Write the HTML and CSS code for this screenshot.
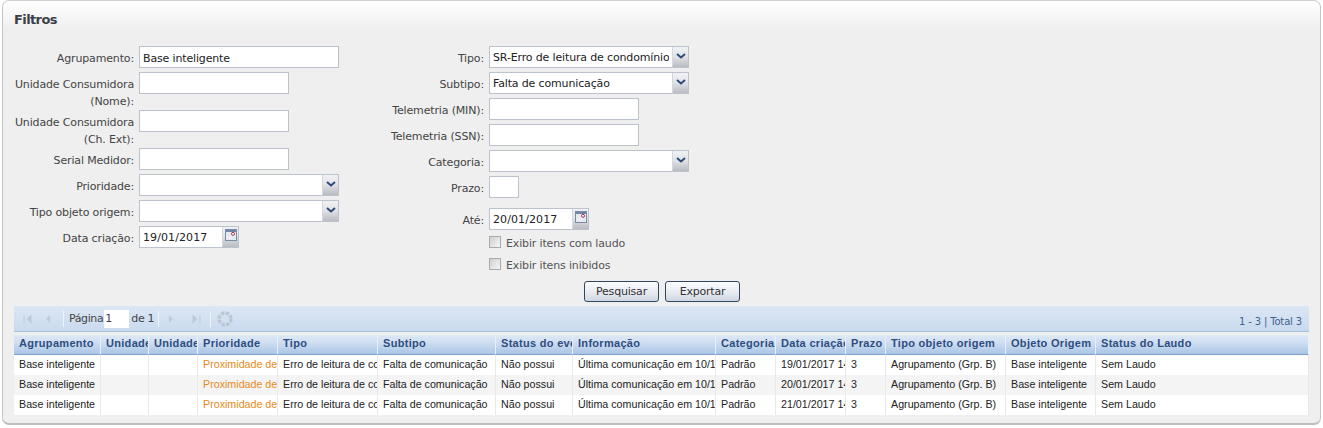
FILE: index.html
```html
<!DOCTYPE html>
<html lang="pt">
<head>
<meta charset="utf-8">
<title>Filtros</title>
<link rel="stylesheet" href="styles.css">
</head>
<body>
<main class="panel">
  <h1 class="panel-title">Filtros</h1>
  <form class="filters">
    <div class="form-col">
      <div class="row"><label class="lbl">Agrupamento:</label><div class="field w200">Base inteligente</div></div>
      <div class="row row-wrap"><label class="lbl">Unidade Consumidora (Nome):</label><div class="field w150"></div></div>
      <div class="row row-wrap"><label class="lbl">Unidade Consumidora (Ch. Ext):</label><div class="field w150"></div></div>
      <div class="row"><label class="lbl">Serial Medidor:</label><div class="field w150"></div></div>
      <div class="row"><label class="lbl">Prioridade:</label><div class="combo w200"><div class="combo-text"></div><span class="trigger"><svg width="10" height="6" viewBox="0 0 10 6"><path d="M1 1l4 3.5L9 1" fill="none" stroke="#2c4a78" stroke-width="2"/></svg></span></div></div>
      <div class="row"><label class="lbl">Tipo objeto origem:</label><div class="combo w200"><div class="combo-text"></div><span class="trigger"><svg width="10" height="6" viewBox="0 0 10 6"><path d="M1 1l4 3.5L9 1" fill="none" stroke="#2c4a78" stroke-width="2"/></svg></span></div></div>
      <div class="row"><label class="lbl">Data criação:</label><div class="combo w100"><div class="combo-text date-text">19/01/2017</div><span class="trigger trigger-date"><svg width="12" height="12" viewBox="0 0 12 12"><rect x=".5" y=".5" width="11" height="11" fill="#e4e9f2" stroke="#7b8ba3"/><rect x="1" y="1" width="10" height="2" fill="#6f84a6"/><circle cx="8" cy="4.8" r="1.5" fill="#fff" stroke="#a8324a"/><path d="M2 8.5h6" stroke="#fff" stroke-dasharray="1 1"/></svg></span></div></div>
    </div>
    <div class="form-col">
      <div class="row"><label class="lbl">Tipo:</label><div class="combo w200"><div class="combo-text">SR-Erro de leitura de condomínio</div><span class="trigger"><svg width="10" height="6" viewBox="0 0 10 6"><path d="M1 1l4 3.5L9 1" fill="none" stroke="#2c4a78" stroke-width="2"/></svg></span></div></div>
      <div class="row"><label class="lbl">Subtipo:</label><div class="combo w200"><div class="combo-text">Falta de comunicação</div><span class="trigger"><svg width="10" height="6" viewBox="0 0 10 6"><path d="M1 1l4 3.5L9 1" fill="none" stroke="#2c4a78" stroke-width="2"/></svg></span></div></div>
      <div class="row"><label class="lbl">Telemetria (MIN):</label><div class="field w150"></div></div>
      <div class="row"><label class="lbl">Telemetria (SSN):</label><div class="field w150"></div></div>
      <div class="row"><label class="lbl">Categoria:</label><div class="combo w200"><div class="combo-text"></div><span class="trigger"><svg width="10" height="6" viewBox="0 0 10 6"><path d="M1 1l4 3.5L9 1" fill="none" stroke="#2c4a78" stroke-width="2"/></svg></span></div></div>
      <div class="row row-wide"><label class="lbl">Prazo:</label><div class="field w30"></div></div>
      <div class="row row-tight"><label class="lbl">Até:</label><div class="combo w100"><div class="combo-text date-text">20/01/2017</div><span class="trigger trigger-date"><svg width="12" height="12" viewBox="0 0 12 12"><rect x=".5" y=".5" width="11" height="11" fill="#e4e9f2" stroke="#7b8ba3"/><rect x="1" y="1" width="10" height="2" fill="#6f84a6"/><circle cx="8" cy="4.8" r="1.5" fill="#fff" stroke="#a8324a"/><path d="M2 8.5h6" stroke="#fff" stroke-dasharray="1 1"/></svg></span></div></div>
      <div class="check"><span class="box"></span><span>Exibir itens com laudo</span></div>
      <div class="check"><span class="box"></span><span>Exibir itens inibidos</span></div>
    </div>
  </form>
  <div class="actions">
    <button type="button" class="btn">Pesquisar</button>
    <button type="button" class="btn">Exportar</button>
  </div>
  <section class="grid">
    <div class="toolbar">
      <svg class="tool m8" width="12" height="12" viewBox="0 0 12 12"><path d="M2 2v8M9 2v8L5 6z" fill="#bccbdd" stroke="#bccbdd"/></svg>
      <svg class="tool m9" width="12" height="12" viewBox="0 0 12 12"><path d="M8 2v8L4 6z" fill="#bccbdd"/></svg>
      <span class="sep"></span>
      <span class="pg-label">Página</span><span class="pg-input">1</span><span class="pg-of">de 1</span>
      <span class="sep sep-a"></span>
      <svg class="tool m13" width="12" height="12" viewBox="0 0 12 12"><path d="M4 2v8l4-4z" fill="#bccbdd"/></svg>
      <svg class="tool m8" width="12" height="12" viewBox="0 0 12 12"><path d="M3 2v8l4-4zM10 2v8" fill="#bccbdd" stroke="#bccbdd"/></svg>
      <span class="sep"></span>
      <svg class="tool" width="18" height="18" viewBox="0 0 18 18"><circle cx="9" cy="9" r="6" fill="none" stroke="#bcc6d2" stroke-width="3.4" stroke-dasharray="3.4 1.3"/></svg>
      <span class="total">1 - 3 | Total 3</span>
    </div>
    <table class="data">
      <colgroup>
        <col class="c87"><col class="c48"><col class="c49"><col class="c80"><col class="c100"><col class="c118"><col class="c77"><col class="c143"><col class="c60"><col class="c70"><col class="c40"><col class="c120"><col class="c90"><col>
      </colgroup>
      <thead>
        <tr><th>Agrupamento</th><th>Unidade Consumidora (Nome)</th><th>Unidade Consumidora (Ch. Ext)</th><th>Prioridade</th><th>Tipo</th><th>Subtipo</th><th>Status do evento</th><th>Informação</th><th>Categoria</th><th>Data criação</th><th>Prazo</th><th>Tipo objeto origem</th><th>Objeto Origem</th><th>Status do Laudo</th></tr>
      </thead>
      <tbody>
        <tr><td>Base inteligente</td><td></td><td></td><td class="warn">Proximidade de vencimento</td><td>Erro de leitura de condomínio</td><td>Falta de comunicação</td><td>Não possui</td><td>Última comunicação em 10/10/2016</td><td>Padrão</td><td>19/01/2017 14:00</td><td>3</td><td>Agrupamento (Grp. B)</td><td>Base inteligente</td><td>Sem Laudo</td></tr>
        <tr class="alt"><td>Base inteligente</td><td></td><td></td><td class="warn">Proximidade de vencimento</td><td>Erro de leitura de condomínio</td><td>Falta de comunicação</td><td>Não possui</td><td>Última comunicação em 10/10/2016</td><td>Padrão</td><td>20/01/2017 14:00</td><td>3</td><td>Agrupamento (Grp. B)</td><td>Base inteligente</td><td>Sem Laudo</td></tr>
        <tr><td>Base inteligente</td><td></td><td></td><td class="warn">Proximidade de vencimento</td><td>Erro de leitura de condomínio</td><td>Falta de comunicação</td><td>Não possui</td><td>Última comunicação em 10/10/2016</td><td>Padrão</td><td>21/01/2017 14:00</td><td>3</td><td>Agrupamento (Grp. B)</td><td>Base inteligente</td><td>Sem Laudo</td></tr>
      </tbody>
    </table>
  </section>
</main>
</body>
</html>
```
FILE: styles.css
```css
* { box-sizing: border-box; }
html, body { margin: 0; height: 100%; background: #fff; }
body { padding: 0 2px; overflow: hidden; font: 11px "DejaVu Sans", sans-serif; letter-spacing: -0.15px; color: #333; }

.panel {
  height: 425px;
  padding: 0 11px;
  border: 1px solid #c4c4c4;
  border-top-color: #d0d0d0;
  border-bottom: 2px solid #bdbdbd;
  border-radius: 7px;
  background: linear-gradient(#fff 0, #efefef 28px, #efefef 100%);
}
.panel-title { height: 45px; margin: 0; padding-top: 11px; font: bold 13px/16px "DejaVu Sans", sans-serif; letter-spacing: -0.6px; color: #3a3f46; }

.filters { display: flex; height: 235px; }
.form-col { width: 350px; }
.row { display: grid; grid-template-columns: 120px auto; column-gap: 5px; margin-bottom: 4px; justify-content: start; align-items: start; }
.row-wrap { margin-bottom: 0; }
.row-wide { margin-bottom: 10px; }
.row-tight { margin-bottom: 2px; }
.lbl { padding-top: 4px; line-height: 17px; text-align: right; color: #444; }

.field, .combo { height: 22px; background: #fff; border: 1px solid #bdc3cc; }
.field { padding: 2px 3px 0; line-height: 20px; color: #222; }
.combo { display: flex; }
.combo-text { flex: 1; min-width: 0; margin-right: 3px; padding: 2px 0 0 3px; overflow: hidden; white-space: nowrap; line-height: 18px; color: #222; }
.date-text { letter-spacing: 0.1px; }
.w200 { width: 200px; }
.w150 { width: 150px; }
.w100 { width: 100px; }
.w30 { width: 30px; }
.trigger {
  display: flex; justify-content: center; padding-top: 6px;
  flex: none; width: 16px;
  border-left: 1px solid #d4d8de;
  background: linear-gradient(#f0f2f5, #e2e4e8 45%, #b9bcc1);
}
.trigger-date { padding-top: 2px; }

.check { display: flex; align-items: center; gap: 5px; height: 22px; margin-left: 125px; color: #555; }
.box { width: 12px; height: 12px; border: 1px solid #a9a9a9; background: linear-gradient(135deg, #cfcfcf, #f7f7f7); margin-top: -3px; }

.actions { display: flex; gap: 6px; height: 25px; padding-left: 570px; }
.btn {
  width: 75px; height: 21px; padding: 0;
  font: 11px "DejaVu Sans", sans-serif; letter-spacing: -0.2px; color: #333;
  border: 1px solid #30475f; border-radius: 3px;
  background: linear-gradient(#fbfcfd, #e7ebf1 55%, #cfd6e0);
}

.grid { width: 1295px; }
.toolbar {
  display: flex; align-items: center; height: 26px; padding: 0 7px 0 8px;
  background: linear-gradient(#dce7f4, #c9daee);
  color: #444; border-bottom: 1px solid #a9c0da;
}
.tool { flex: none; }
.m8 { margin-right: 8px; }
.m9 { margin-right: 9px; }
.m13 { margin-right: 13px; }
.sep { width: 1px; height: 16px; margin-right: 5px; background: #eef4fb; }
.sep-a { margin-right: 6px; }
.pg-label { margin-right: 1px; letter-spacing: -0.4px; }
.pg-input { width: 25px; height: 18px; padding-left: 1px; background: #fff; line-height: 18px; }
.pg-of { margin: 0 4px 0 2px; letter-spacing: -0.3px; }
.total { margin: 6px 0 0 auto; color: #3d628f; font-size: 10px; }

.data { width: 100%; margin-top: 3px; table-layout: fixed; border-collapse: separate; border-spacing: 0; font: 10.7px "Liberation Sans", sans-serif; letter-spacing: 0; color: #222; }
.c87 { width: 87px; } .c48 { width: 48px; } .c49 { width: 49px; } .c80 { width: 80px; } .c100 { width: 100px; } .c118 { width: 118px; }
.c77 { width: 77px; } .c143 { width: 143px; } .c60 { width: 60px; } .c70 { width: 70px; } .c40 { width: 40px; } .c120 { width: 120px; } .c90 { width: 90px; }
.data th {
  height: 20px; padding: 0 0 3px 5px;
  overflow: hidden; white-space: nowrap; text-align: left;
  font: bold 11px "Liberation Sans", sans-serif; letter-spacing: 0.3px; color: #2d4d80;
  border-right: 1px solid #e7f0fa; border-bottom: 1px solid #7f9fc8;
  background: linear-gradient(#dfe9f6, #cfdef1 40%, #a9c5e6);
}
.data td {
  height: 20px; padding: 0 0 2px 5px;
  overflow: hidden; white-space: nowrap;
  border-right: 1px solid #e9e9e9; background: #fff;
}
.data .alt td { background: #f4f4f4; }
.data .warn { color: #e98a1c; }
```
